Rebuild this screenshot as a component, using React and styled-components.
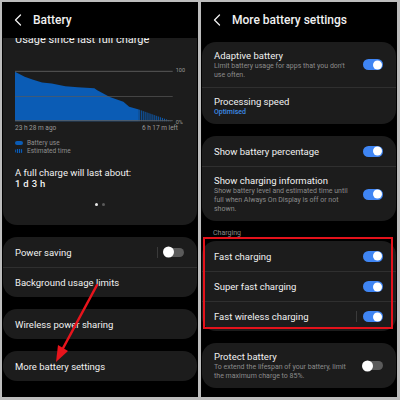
import React from 'react'
import styled, { createGlobalStyle } from 'styled-components'
import { ChevronLeft } from 'lucide-react'

const GlobalStyle = createGlobalStyle`
  body {
    margin: 0;
    background: #bdbdbd;
    font-family: Roboto, "Noto Sans", sans-serif;
  }
`

const Frame = styled.div`
  width: 400px;
  height: 400px;
  box-sizing: border-box;
  padding: 2px 3px 3px 2px;
  display: grid;
  grid-template-columns: 196px 196px;
  gap: 3px;
  background: #bdbdbd;
`

const Screen = styled.section`
  position: relative;
  background: #000;
  color: #f1f1f1;
  overflow: hidden;
  display: flex;
  flex-direction: column;
`

const Header = styled.header`
  position: relative;
  z-index: 1;
  height: 36px;
  flex: none;
  display: flex;
  align-items: center;
  gap: 5px;
  padding-left: 6px;
  background: #000;
  font-size: 12px;
  font-weight: 500;
`

const Body = styled.div`
  display: flex;
  flex-direction: column;
  padding: ${p => p.$top ?? 0}px 0 0;
  margin-top: ${p => p.$shift ?? 0}px;
`

const Card = styled.div`
  position: relative;
  margin: 0 1px ${p => p.$mb ?? 12}px;
  background: #1c1c1c;
  border-radius: 14px;
  padding: ${p => p.$pad || '0'};
`

const Row = styled.div`
  display: flex;
  align-items: center;
  min-height: 30px;
  box-sizing: border-box;
  padding: 7px 13px 7px 12px;
  & + & {
    border-top: 1px solid #2f2f2f;
  }
`

const RowText = styled.div`
  flex: 1;
  min-width: 0;
  padding-right: 8px;
`

const Title = styled.div`
  font-size: 9.5px;
  line-height: 13px;
  color: #f1f1f1;
`

const Sub = styled.div`
  font-size: 7px;
  line-height: 9px;
  color: ${p => (p.$blue ? '#3d8be4' : '#8b8b8b')};
  font-weight: ${p => (p.$blue ? 500 : 400)};
`

const Separator = styled.span`
  width: 1px;
  height: 11px;
  background: #3a3a3a;
  margin-right: 6px;
`

const Track = styled.span`
  position: relative;
  flex: none;
  width: 20px;
  height: ${p => (p.$on ? 11 : 9)}px;
  border-radius: 6px;
  background: ${p => (p.$on ? '#3f85f3' : '#5b5b5b')};
  &::after {
    content: '';
    position: absolute;
    top: 50%;
    transform: translateY(-50%);
    ${p => (p.$on ? 'right: 1px;' : 'left: -1px;')}
    width: ${p => (p.$on ? 9 : 11)}px;
    height: ${p => (p.$on ? 9 : 11)}px;
    border-radius: 50%;
    background: #fff;
  }
`

const SectionLabel = styled.div`
  padding: 7px 12px 3px;
  font-size: 7px;
  line-height: 10px;
  color: #8b8b8b;
`

const Highlight = styled.div`
  position: absolute;
  top: -4px;
  bottom: 2px;
  left: 1px;
  right: 3px;
  border: 2.5px solid #e3121b;
  pointer-events: none;
`

/* usage card */
const UsageTitle = styled.div`
  font-size: 11px;
  line-height: 14px;
  margin-bottom: 23px;
`

const ChartRow = styled.div`
  display: flex;
  gap: 3px;
`

const AxisLabels = styled.div`
  display: flex;
  flex-direction: column;
  justify-content: space-between;
  font-size: 5.5px;
  color: #9a9a9a;
  margin: -3px 0;
`

const TimeRow = styled.div`
  width: 163px;
  display: flex;
  justify-content: space-between;
  margin-top: 2px;
  font-size: 6.5px;
  line-height: 8px;
  color: #9a9a9a;
`

const Legend = styled.div`
  margin-top: 7px;
`

const LegendItem = styled.div`
  display: flex;
  align-items: center;
  gap: 4px;
  font-size: 6.5px;
  line-height: 8px;
  color: #8f8f8f;
`

const Pill = styled.span`
  width: 8px;
  height: 4px;
  border-radius: 2px;
  background: ${p =>
    p.$striped
      ? 'repeating-linear-gradient(90deg, #0b5cb5 0 1px, #10243d 1px 2px)'
      : '#0b5cb5'};
`

const Estimate = styled.div`
  margin-top: 11.5px;
  font-size: 9.5px;
  line-height: 11px;
`

const EstimateValue = styled.div`
  font-size: 9.5px;
  line-height: 11px;
  font-weight: 500;
  letter-spacing: 0.3px;
`

const Dots = styled.div`
  display: flex;
  justify-content: center;
  gap: 4px;
  margin-top: 14px;
`

const Dot = styled.span`
  width: 3px;
  height: 3px;
  border-radius: 50%;
  background: ${p => (p.$active ? '#e8e8e8' : '#5a5a5a')};
`

const Overlay = styled.svg`
  position: absolute;
  inset: 0;
  pointer-events: none;
`

const Toggle = ({ on, sep }) => (
  <>
    {sep && <Separator />}
    <Track $on={on} />
  </>
)

const Setting = ({ title, sub, blue, toggle, sep }) => (
  <Row>
    <RowText>
      <Title>{title}</Title>
      {sub && <Sub $blue={blue}>{sub}</Sub>}
    </RowText>
    {toggle !== undefined && <Toggle on={toggle} sep={sep} />}
  </Row>
)

const UsageChart = () => (
  <svg width="163" height="52" viewBox="0 0 163 52">
    <defs>
      <pattern id="est" width="2" height="4" patternUnits="userSpaceOnUse">
        <rect width="1" height="4" fill="#0b5cb5" />
      </pattern>
    </defs>
    <polygon
      fill="#0b5cb5"
      points="0,1 10,6 18,9 28,12 38,13 52,16 65,17 82,18 85,20 98,27 112,32 118,37 128,40 128,52 0,52"
    />
    <polygon fill="url(#est)" points="128,40 162,52 128,52" />
    <line x1="0" y1="0.5" x2="163" y2="0.5" stroke="#5a5a5a" strokeWidth="1" />
    <line x1="0" y1="26.5" x2="163" y2="26.5" stroke="#5a5a5a" strokeOpacity="0.7" strokeWidth="1" />
    <line x1="0" y1="51.5" x2="163" y2="51.5" stroke="#5a5a5a" strokeWidth="1" />
  </svg>
)

const BatteryScreen = () => (
  <Screen>
    <Header>
      <ChevronLeft size={20} strokeWidth={1.5} />
      Battery
    </Header>
    <Body $shift={-15}>
      <Card $pad="10px 12px 19.5px">
        <UsageTitle>Usage since last full charge</UsageTitle>
        <ChartRow>
          <UsageChart />
          <AxisLabels>
            <span>100</span>
            <span>0%</span>
          </AxisLabels>
        </ChartRow>
        <TimeRow>
          <span>23 h 28 m ago</span>
          <span>6 h 17 m left</span>
        </TimeRow>
        <Legend>
          <LegendItem>
            <Pill />
            Battery use
          </LegendItem>
          <LegendItem>
            <Pill $striped />
            Estimated time
          </LegendItem>
        </Legend>
        <Estimate>A full charge will last about:</Estimate>
        <EstimateValue>1 d 3 h</EstimateValue>
        <Dots>
          <Dot $active />
          <Dot />
        </Dots>
      </Card>
      <Card>
        <Setting title="Power saving" toggle={false} sep />
        <Setting title="Background usage limits" />
      </Card>
      <Card>
        <Setting title="Wireless power sharing" />
      </Card>
      <Card>
        <Setting title="More battery settings" />
      </Card>
    </Body>
    <Overlay width="196" height="395">
      <line x1="95" y1="283" x2="59" y2="350" stroke="#e8141c" strokeWidth="2.5" strokeLinecap="round" />
      <polygon points="54,360 56,343 66,349" fill="#e8141c" />
    </Overlay>
  </Screen>
)

const MoreSettingsScreen = () => (
  <Screen>
    <Header>
      <ChevronLeft size={20} strokeWidth={1.5} />
      More battery settings
    </Header>
    <Body $top={4}>
      <Card>
        <Setting
          title="Adaptive battery"
          sub="Limit battery usage for apps that you don't use often."
          toggle
        />
        <Setting title="Processing speed" sub="Optimised" blue />
      </Card>
      <Card $mb={0}>
        <Setting title="Show battery percentage" toggle />
        <Setting
          title="Show charging information"
          sub="Show battery level and estimated time until full when Always On Display is off or not shown."
          toggle
        />
      </Card>
      <SectionLabel>Charging</SectionLabel>
      <Card>
        <Setting title="Fast charging" toggle />
        <Setting title="Super fast charging" toggle />
        <Setting title="Fast wireless charging" toggle sep />
        <Highlight />
      </Card>
      <Card>
        <Setting
          title="Protect battery"
          sub="To extend the lifespan of your battery, limit the maximum charge to 85%."
          toggle={false}
        />
      </Card>
    </Body>
  </Screen>
)

export default function App() {
  return (
    <>
      <GlobalStyle />
      <Frame>
        <BatteryScreen />
        <MoreSettingsScreen />
      </Frame>
    </>
  )
}
